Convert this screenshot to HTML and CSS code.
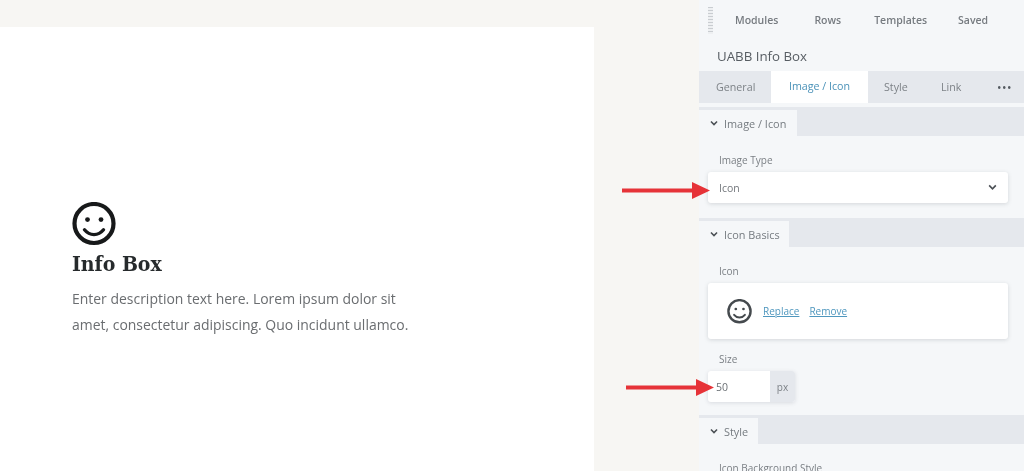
FILE: index.html
```html
<!DOCTYPE html>
<html lang="en">
<head>
<meta charset="utf-8">
<title>UABB Info Box</title>
<link rel="stylesheet" href="styles.css">
</head>
<body>
<svg class="defs" width="0" height="0" aria-hidden="true">
  <symbol id="smile" viewBox="0 0 44 44">
    <circle cx="22" cy="21.500" r="19.500" fill="none" stroke="currentColor" stroke-width="4.200"/>
    <circle cx="15.500" cy="17.600" r="2.400" fill="currentColor"/>
    <circle cx="29" cy="17.600" r="2.400" fill="currentColor"/>
    <path d="M12.500 27.800c2.600 3.200 5.800 4.800 9.500 4.800s6.900-1.600 9.500-4.800" fill="none" stroke="currentColor" stroke-width="3.400" stroke-linecap="round"/>
  </symbol>
  <symbol id="chev" viewBox="0 0 10 8">
    <path d="M1.200 1.600 5 5.400l3.800-3.800" fill="none" stroke="currentColor" stroke-width="1.900"/>
  </symbol>
  <symbol id="arrow" viewBox="0 0 88 17">
    <path d="M0 6.500h70V0l18 8.500L70 17v-6.500H0z" fill="currentColor"/>
  </symbol>
</svg>
<div class="page">
  <main class="stage">
    <section class="canvas">
      <svg class="face"><use href="#smile"/></svg>
      <h1 class="box-title">Info Box</h1>
      <p class="box-text">Enter description text here. Lorem ipsum dolor sit<br>amet, consectetur adipiscing. Quo incidunt ullamco.</p>
    </section>
  </main>
  <aside class="panel">
    <nav class="top-nav">
      <span class="grip"></span>
      <span class="top-item modules">Modules</span>
      <span class="top-item rows">Rows</span>
      <span class="top-item templates">Templates</span>
      <span class="top-item saved">Saved</span>
    </nav>
    <h2 class="panel-title">UABB Info Box</h2>
    <div class="tabs">
      <span class="tab general">General</span>
      <span class="tab active">Image / Icon</span>
      <span class="tab style">Style</span>
      <span class="tab link">Link</span>
      <span class="more">&bull;&bull;&bull;</span>
    </div>
    <div class="section-head first">
      <span class="section-tab w-image"><svg class="chev"><use href="#chev"/></svg>Image / Icon</span>
    </div>
    <div class="fields image-fields">
      <label class="field-label">Image Type</label>
      <div class="select">
        <span>Icon</span>
        <svg class="select-chev"><use href="#chev"/></svg>
        <svg class="arrow arrow-one"><use href="#arrow"/></svg>
      </div>
    </div>
    <div class="section-head">
      <span class="section-tab w-basics"><svg class="chev"><use href="#chev"/></svg>Icon Basics</span>
    </div>
    <div class="fields basics-fields">
      <label class="field-label">Icon</label>
      <div class="icon-card">
        <svg class="card-face"><use href="#smile"/></svg>
        <a class="action replace">Replace</a>
        <a class="action">Remove</a>
      </div>
      <label class="field-label size-label">Size</label>
      <div class="size-input">
        <span class="size-value">50</span>
        <span class="size-unit">px</span>
        <svg class="arrow arrow-two"><use href="#arrow"/></svg>
      </div>
    </div>
    <div class="section-head">
      <span class="section-tab w-style"><svg class="chev"><use href="#chev"/></svg>Style</span>
    </div>
    <div class="fields style-fields">
      <label class="field-label">Icon Background Style</label>
    </div>
  </aside>
</div>
</body>
</html>
```
FILE: styles.css
```css
* { box-sizing: border-box; }
html, body { margin: 0; height: 100%; overflow: hidden; }
body {
  background: #f7f6f3;
  font-family: "Open Sans", "Liberation Sans", sans-serif;
  color: #6f7479;
}
.defs { position: absolute; }
.page { display: flex; height: 471px; overflow: hidden; filter: blur(0.55px); }
.stage { width: 699px; flex: none; padding-top: 27px; }
.canvas {
  width: 594px;
  height: 444px;
  background: #fff;
  padding: 175px 0 0 72px;
}
.face { display: block; width: 44px; height: 44px; color: #17191a; margin-left: -0.500px; }
.box-title {
  margin: 3px 0 0;
  font-family: "DejaVu Serif Condensed", "DejaVu Serif", "Liberation Serif", serif;
  font-weight: 700;
  font-size: 21px;
  line-height: 30px;
  color: #262a2c;
}
.box-text {
  margin: 7px 0 0;
  font-size: 13.960px;
  line-height: 26px;
  color: #6a6d70;
  white-space: nowrap;
}
.panel {
  width: 325px;
  flex: none;
  background: #f5f7f9;
  font-size: 10.500px;
}
.top-nav { height: 40px; display: flex; align-items: center; }
.grip {
  width: 5px;
  height: 27px;
  margin: 0 0 0 9px;
  background: repeating-linear-gradient(#c9cdd1 0 1.500px, #eef0f2 1.500px 3px);
}
.top-item { font-size: 10.500px; font-weight: 600; color: #767b80; }
.modules { margin-left: 22px; }
.rows { margin-left: 36px; }
.templates { margin-left: 33px; }
.saved { margin-left: 31px; }
.panel-title {
  margin: 0;
  height: 31px;
  padding: 6px 0 0 18px;
  font-size: 13.300px;
  font-weight: 400;
  line-height: 20px;
  color: #575d63;
}
.tabs {
  height: 32px;
  display: flex;
  align-items: center;
  background: #e5e8ed;
  color: #7d8287;
}
.tab { font-size: 10.700px; }
.general { margin-left: 17px; width: 55px; }
.tab.active {
  width: 97px;
  height: 32px;
  line-height: 31px;
  text-align: center;
  background: #fff;
  color: #4b92b8;
}
.style { margin-left: 16px; width: 57px; }
.link { width: 56px; }
.more { font-size: 12px; letter-spacing: 0.500px; color: #555b61; }
.section-head { height: 29px; background: #e5e8ed; display: flex; align-items: flex-end; }
.section-head.first { margin-top: 4px; }
.section-tab {
  height: 26px;
  display: flex;
  align-items: center;
  padding-left: 11px;
  background: #f5f7f9;
  color: #757b80;
  font-size: 10.900px;
}
.w-image { width: 98px; }
.w-basics { width: 90px; }
.w-style { width: 59px; padding-top: 1px; }
.chev { width: 8px; height: 7px; margin-right: 6px; color: #4a4f54; }
.fields { padding: 0 16px 0 9px; }
.image-fields { height: 82px; padding-top: 17px; }
.basics-fields { height: 168px; padding-top: 17px; }
.style-fields { padding-top: 17px; }
.field-label {
  display: block;
  padding-left: 11px;
  font-size: 10px;
  line-height: 15px;
  color: #7a7f84;
}
.select {
  position: relative;
  margin-top: 4px;
  height: 31px;
  display: flex;
  align-items: center;
  justify-content: space-between;
  padding: 0 11px;
  background: #fff;
  border-radius: 3px;
  box-shadow: 0 1px 4px rgba(60, 70, 85, .18);
  color: #73777c;
}
.select-chev { width: 9px; height: 7px; color: #4a4f54; }
.icon-card {
  margin-top: 4px;
  height: 56px;
  display: flex;
  align-items: center;
  padding-left: 19px;
  background: #fff;
  border-radius: 3px;
  box-shadow: 0 1px 4px rgba(60, 70, 85, .18);
}
.card-face { width: 25px; height: 25px; color: #454a4e; margin-right: 11px; }
.action { font-size: 10px; color: #4f97be; text-decoration: underline; }
.replace { margin-right: 10px; }
.size-label { margin-top: 13px; }
.size-input {
  position: relative;
  margin-top: 4px;
  width: 87px;
  height: 31px;
  display: flex;
  border-radius: 3px;
  background: #fff;
  box-shadow: 0 1px 4px rgba(60, 70, 85, .15);
  line-height: 33px;
}
.size-value { width: 62px; padding-left: 8px; color: #6b7075; font-size: 10.500px; }
.size-unit { width: 25px; text-align: center; background: #e5e8ed; color: #7d8287; font-size: 10px; border-radius: 0 3px 3px 0; }
.arrow { position: absolute; color: #e63338; }
.arrow-one { left: -86px; top: 9.500px; width: 88px; height: 17px; }
.arrow-two { left: -82px; top: 7.500px; width: 88px; height: 17px; }
```
